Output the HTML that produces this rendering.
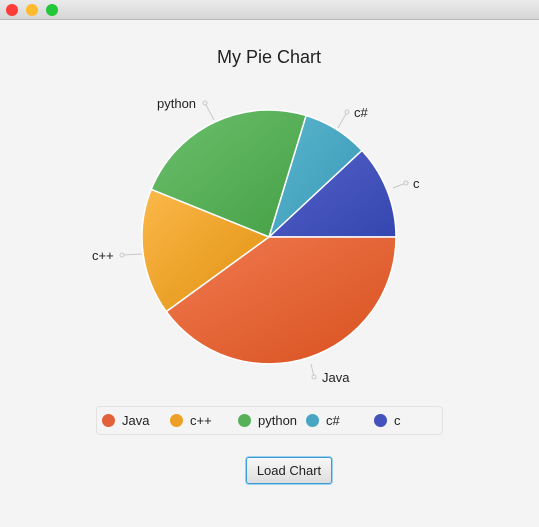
<!DOCTYPE html>
<html><head><style>
body{margin:0;width:539px;height:527px;background:#f4f4f4;font-family:"Liberation Sans",sans-serif;position:relative;overflow:hidden}
.tb{position:absolute;left:0;top:0;width:539px;height:19px;background:linear-gradient(#ebebeb,#d6d6d6);border-bottom:1px solid #b8b8b8}
.d{position:absolute;top:4px;width:12px;height:12px;border-radius:50%}
.lg{position:absolute;left:96px;top:406px;width:345px;height:27px;border:1px solid #e2e2e2;border-radius:4px;background:#f4f4f4}
.it{position:absolute;top:413px;font-size:13px;color:#222}
.it i{position:absolute;left:-20px;top:1px;width:13px;height:13px;border-radius:50%}
.btn{position:absolute;left:246px;top:457px;width:84px;height:25px;border:1px solid #3c9cd6;border-radius:3px;background:linear-gradient(#f8f8f8,#dedede);font-size:13px;text-align:center;line-height:25px;color:#222;box-shadow:0 0 0 1px #9cd0ef}
</style></head><body>
<div class="tb"><div class="d" style="left:6px;background:#fc3d39"></div><div class="d" style="left:26px;background:#fdbb2d"></div><div class="d" style="left:46px;background:#24c63a"></div></div>
<svg width="539" height="527" style="position:absolute;left:0;top:0">
<defs>
<linearGradient id="gj" x1="0" y1="0" x2="1" y2="1"><stop offset="0" stop-color="#f07a50"/><stop offset="1" stop-color="#d8501e"/></linearGradient>
<linearGradient id="gc" x1="0" y1="0" x2="1" y2="1"><stop offset="0" stop-color="#fbb84a"/><stop offset="1" stop-color="#e0900e"/></linearGradient>
<linearGradient id="gp" x1="0" y1="0" x2="1" y2="1"><stop offset="0" stop-color="#6cc06c"/><stop offset="1" stop-color="#45a045"/></linearGradient>
<linearGradient id="gs" x1="0" y1="0" x2="1" y2="1"><stop offset="0" stop-color="#5ab6cc"/><stop offset="1" stop-color="#3a98b8"/></linearGradient>
<linearGradient id="gb" x1="0" y1="0" x2="1" y2="1"><stop offset="0" stop-color="#5462c8"/><stop offset="1" stop-color="#3546b0"/></linearGradient>
</defs>
<g stroke="#fff" stroke-width="1.5">
<path d="M269 237 L396 237 A127 127 0 0 0 361.9 150.4 Z" fill="url(#gb)"/>
<path d="M269 237 L361.9 150.4 A127 127 0 0 0 306.1 115.5 Z" fill="url(#gs)"/>
<path d="M269 237 L306.1 115.5 A127 127 0 0 0 151.2 189.4 Z" fill="url(#gp)"/>
<path d="M269 237 L151.2 189.4 A127 127 0 0 0 166.3 311.6 Z" fill="url(#gc)"/>
<path d="M269 237 L166.3 311.6 A127 127 0 0 0 396 237 Z" fill="url(#gj)"/>
</g>
<g stroke="#c8c8c8" fill="#f4f4f4" stroke-width="1">
<line x1="214" y1="120" x2="205" y2="103"/><circle cx="205" cy="103" r="2"/>
<line x1="338" y1="128" x2="347" y2="112"/><circle cx="347" cy="112" r="2"/>
<line x1="393" y1="188" x2="406" y2="183"/><circle cx="406" cy="183" r="2"/>
<line x1="142" y1="254" x2="122" y2="255"/><circle cx="122" cy="255" r="2"/>
<line x1="311" y1="364" x2="314" y2="377"/><circle cx="314" cy="377" r="2"/>
</g>
<g font-size="13" fill="#222">
<text x="157" y="108">python</text>
<text x="354" y="117">c#</text>
<text x="413" y="188">c</text>
<text x="92" y="260">c++</text>
<text x="322" y="382">Java</text>
</g>
<text x="269" y="63" font-size="18" text-anchor="middle" fill="#222">My Pie Chart</text>
</svg>
<div class="lg"></div>
<div class="it" style="left:122px"><i style="background:#e2603a"></i>Java</div>
<div class="it" style="left:190px"><i style="background:#eca025"></i>c++</div>
<div class="it" style="left:258px"><i style="background:#58b058"></i>python</div>
<div class="it" style="left:326px"><i style="background:#48a6c2"></i>c#</div>
<div class="it" style="left:394px"><i style="background:#4452bc"></i>c</div>
<div class="btn">Load Chart</div>
</body></html>
